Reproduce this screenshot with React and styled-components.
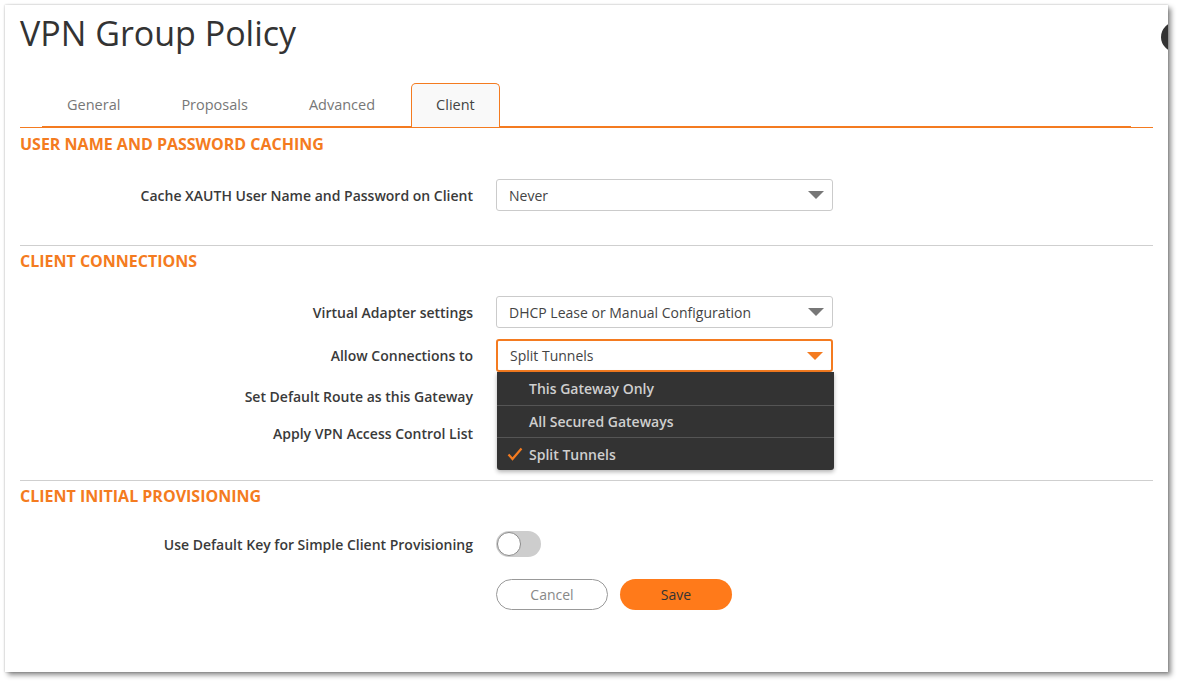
import React from 'react';
import styled, { createGlobalStyle } from 'styled-components';

const ORANGE = '#f47b20';

const GlobalStyle = createGlobalStyle`
  html, body {
    margin: 0;
    padding: 0;
    background: #fff;
    font-family: "Open Sans", Lato, Arial, sans-serif;
  }
`;

const Page = styled.div`
  padding: 5px 9px 10px 5px;
`;

const Card = styled.div`
  position: relative;
  overflow: hidden;
  height: 667px;
  background: #fff;
  box-shadow: 0 0 2px rgba(0, 0, 0, 0.25), 3px 3px 5px rgba(0, 0, 0, 0.45);
  padding: 8px 15px 0 15px;
  box-sizing: border-box;
`;

/* dark close button peeking from the clipped right edge */
const CloseDot = styled.div`
  position: absolute;
  top: 17px;
  left: 1156px;
  width: 30px;
  height: 30px;
  border-radius: 50%;
  background: #333;
`;

const Title = styled.h1`
  margin: 0;
  font-size: 34px;
  line-height: 40px;
  font-weight: 400;
  color: #333;
`;

const TabBar = styled.div`
  position: relative;
  display: flex;
  margin-top: 30px;
  padding: 0 22px;
  border-bottom: 1px solid ${ORANGE};

  /* thicker accent line under the tabs */
  &::after {
    content: '';
    position: absolute;
    left: 22px;
    right: 22px;
    bottom: -1px;
    height: 2px;
    background: ${ORANGE};
  }
`;

const Tab = styled.div`
  position: relative;
  z-index: 1;
  height: 44px;
  box-sizing: border-box;
  padding: 0 24px 2px;
  margin-right: 11px;
  display: flex;
  align-items: center;
  font-size: 14.5px;
  color: ${(p) => (p.$active ? '#444' : '#777')};
  background: ${(p) => (p.$active ? '#f9f9f9' : 'transparent')};
  border: 1px solid ${(p) => (p.$active ? ORANGE : 'transparent')};
  border-bottom: none;
  border-radius: 5px 5px 0 0;
`;

const Section = styled.section`
  padding: ${(p) => (p.$first ? '6px' : '5px')} 0 34px;
  border-bottom: ${(p) => (p.$last ? 'none' : '1px solid #cfcfcf')};
`;

const SectionHeader = styled.h2`
  margin: 0 0 25px;
  font-size: 16px;
  line-height: 20px;
  font-weight: 700;
  color: ${ORANGE};
  text-transform: uppercase;
`;

const Rows = styled.div`
  display: flex;
  flex-direction: column;
  gap: 11px;
`;

const Row = styled.div`
  display: grid;
  grid-template-columns: 453px 1fr;
  column-gap: 23px;
  align-items: center;
  min-height: ${(p) => p.$h || 32}px;
`;

const Label = styled.div`
  text-align: right;
  font-size: 14px;
  font-weight: 600;
  color: #3a3a3a;
`;

const Control = styled.div`
  position: relative;
  display: flex;
  align-items: center;
  gap: 12px;
`;

const SelectBox = styled.div`
  width: 337px;
  height: ${(p) => (p.$open ? 33 : 32)}px;
  box-sizing: border-box;
  display: flex;
  align-items: center;
  justify-content: space-between;
  padding: 0 8px 0 12px;
  border: ${(p) => (p.$open ? `2px solid ${ORANGE}` : '1px solid #cbcbcb')};
  border-radius: 3px;
  background: #fff;
  font-size: 14px;
  color: #444;
`;

const Caret = styled.span`
  width: 0;
  height: 0;
  border-left: 8px solid transparent;
  border-right: 8px solid transparent;
  border-top: 8px solid ${(p) => (p.$open ? ORANGE : '#777')};
`;

const Menu = styled.ul`
  position: absolute;
  z-index: 5;
  top: 33px;
  left: 1px;
  width: 337px;
  margin: 0;
  padding: 0;
  list-style: none;
  background: #333;
  border-radius: 0 0 3px 3px;
  box-shadow: 0 2px 4px rgba(0, 0, 0, 0.3);
`;

const MenuItem = styled.li`
  position: relative;
  height: ${(p) => p.$h}px;
  box-sizing: border-box;
  display: flex;
  align-items: center;
  padding-left: 32px;
  font-size: 14px;
  font-weight: 600;
  color: #cfcfcf;
  border-top: ${(p) => (p.$first ? 'none' : '1px solid #555')};
`;

const Check = styled.svg`
  position: absolute;
  left: 10px;
  top: 50%;
  margin-top: -8px;
`;

const Toggle = styled.div`
  position: relative;
  width: 45px;
  height: 26px;
  border-radius: 13px;
  background: #cdcdcd;

  &::before {
    content: '';
    position: absolute;
    left: 1px;
    top: 1px;
    width: 22px;
    height: 22px;
    border-radius: 50%;
    background: #fff;
    border: 1px solid #8a8a8a;
  }
`;

const Actions = styled.div`
  display: flex;
  gap: 12px;
  margin-top: 22px;
  padding-left: 476px;
`;

const Button = styled.button`
  width: 112px;
  height: 31px;
  border-radius: 16px;
  font-family: inherit;
  font-size: 14px;
  cursor: pointer;
  border: ${(p) => (p.$primary ? 'none' : '1px solid #999')};
  background: ${(p) => (p.$primary ? '#ff7a1a' : '#fff')};
  color: ${(p) => (p.$primary ? '#333' : '#888')};
`;

const Select = ({ value, open }) => (
  <SelectBox $open={open}>
    <span>{value}</span>
    <Caret $open={open} />
  </SelectBox>
);

export default function App() {
  return (
    <>
      <GlobalStyle />
      <Page>
        <Card>
          <CloseDot />
          <Title>VPN Group Policy</Title>
          <TabBar>
            <Tab>General</Tab>
            <Tab>Proposals</Tab>
            <Tab>Advanced</Tab>
            <Tab $active>Client</Tab>
          </TabBar>

          <Section $first>
            <SectionHeader>User Name and Password Caching</SectionHeader>
            <Rows>
              <Row>
                <Label>Cache XAUTH User Name and Password on Client</Label>
                <Control>
                  <Select value="Never" />
                </Control>
              </Row>
            </Rows>
          </Section>

          <Section>
            <SectionHeader>Client Connections</SectionHeader>
            <Rows>
              <Row>
                <Label>Virtual Adapter settings</Label>
                <Control>
                  <Select value="DHCP Lease or Manual Configuration" />
                </Control>
              </Row>
              <Row $h={32}>
                <Label>Allow Connections to</Label>
                <Control>
                  <Select value="Split Tunnels" open />
                  <Menu>
                    <MenuItem $first $h={33}>This Gateway Only</MenuItem>
                    <MenuItem $h={32}>All Secured Gateways</MenuItem>
                    <MenuItem $h={33}>
                      <Check width="16" height="16" viewBox="0 0 16 16">
                        <polyline points="1.5,8.5 5.5,13 14.5,2.5" fill="none" stroke={ORANGE} strokeWidth="2.2" />
                      </Check>
                      Split Tunnels
                    </MenuItem>
                  </Menu>
                </Control>
              </Row>
              <Row $h={26}>
                <Label>Set Default Route as this Gateway</Label>
                <Control />
              </Row>
              <Row $h={26}>
                <Label>Apply VPN Access Control List</Label>
                <Control />
              </Row>
            </Rows>
          </Section>

          <Section $last>
            <SectionHeader>Client Initial Provisioning</SectionHeader>
            <Rows>
              <Row $h={26}>
                <Label>Use Default Key for Simple Client Provisioning</Label>
                <Control>
                  <Toggle />
                </Control>
              </Row>
            </Rows>
            <Actions>
              <Button>Cancel</Button>
              <Button $primary>Save</Button>
            </Actions>
          </Section>
        </Card>
      </Page>
    </>
  );
}
